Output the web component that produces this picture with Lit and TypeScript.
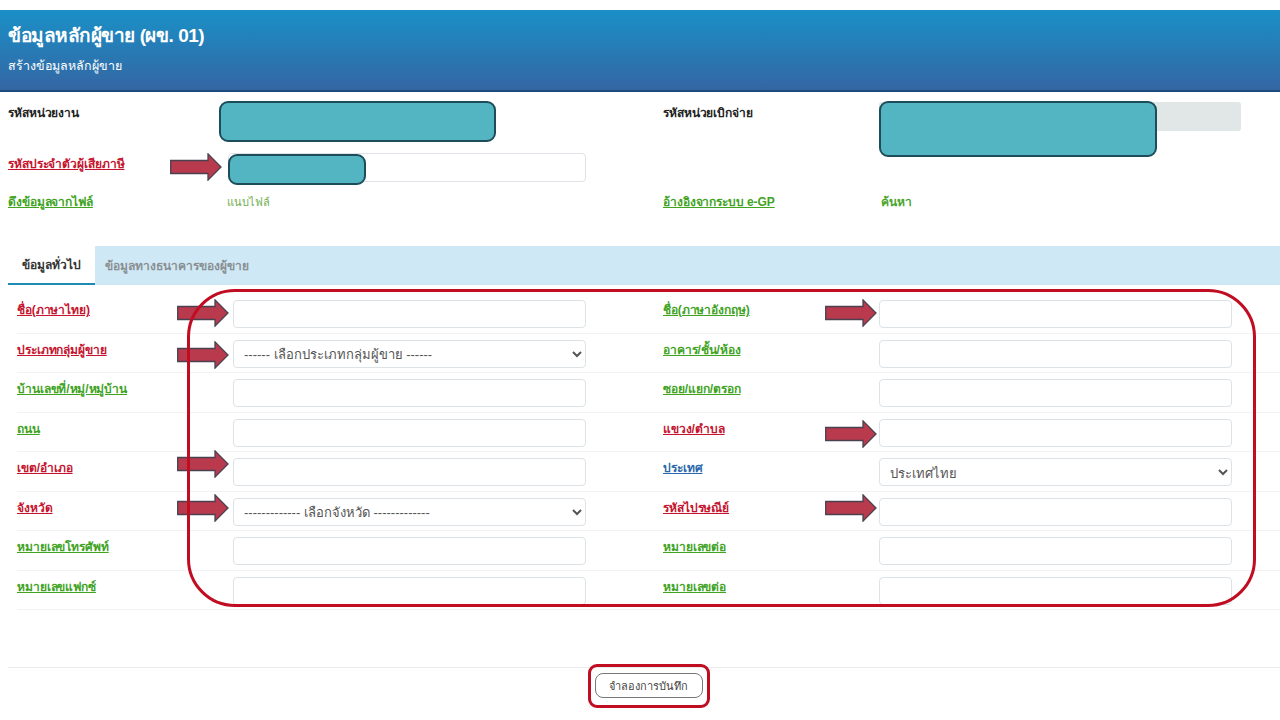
import { LitElement, html, css, svg } from "lit";
import { customElement } from "lit/decorators.js";

type Tone = "red" | "green" | "blue";
interface Field { label: string; tone: Tone; arrowDy?: number; select?: string; }

const rows: [Field, Field][] = [
  [{ label: "ชื่อ(ภาษาไทย)", tone: "red", arrowDy: 5 }, { label: "ชื่อ(ภาษาอังกฤษ)", tone: "green", arrowDy: 5 }],
  [{ label: "ประเภทกลุ่มผู้ขาย", tone: "red", arrowDy: 7, select: "------ เลือกประเภทกลุ่มผู้ขาย ------" }, { label: "อาคาร/ชั้น/ห้อง", tone: "green" }],
  [{ label: "บ้านเลขที่/หมู่/หมู่บ้าน", tone: "green" }, { label: "ซอย/แยก/ตรอก", tone: "green" }],
  [{ label: "ถนน", tone: "green" }, { label: "แขวง/ตำบล", tone: "red", arrowDy: 7 }],
  [{ label: "เขต/อำเภอ", tone: "red", arrowDy: -2 }, { label: "ประเทศ", tone: "blue", select: "ประเทศไทย" }],
  [{ label: "จังหวัด", tone: "red", arrowDy: 2, select: "------------- เลือกจังหวัด -------------" }, { label: "รหัสไปรษณีย์", tone: "red", arrowDy: 2 }],
  [{ label: "หมายเลขโทรศัพท์", tone: "green" }, { label: "หมายเลขต่อ", tone: "green" }],
  [{ label: "หมายเลขแฟกซ์", tone: "green" }, { label: "หมายเลขต่อ", tone: "green" }],
];

const arrow = (cls: string, dy?: number) => html`<svg class="arrow ${cls}" style=${dy === undefined ? "" : `top:${dy}px`} viewBox="0 0 52 28" aria-hidden="true">
  ${svg`<path d="M0.7 7.5H38V0.9L51 14L38 27.1V20.5H0.7Z" fill="#b83a4c" stroke="#4a4150" stroke-width="1.3"/>`}
</svg>`;

@customElement("app-root")
export class AppRoot extends LitElement {
  static styles = css`
    :host { display: block; width: 1280px; height: 720px; overflow: hidden; background: #fff; padding-top: 10px; box-sizing: border-box;
      font-family: "Liberation Sans", "Noto Sans", sans-serif; color: #333; font-size: 12px; letter-spacing: -0.1px; }
    * { box-sizing: border-box; }
    .head { height: 82px; padding: 12px 8px 0; color: #fff; background: linear-gradient(#1a90c7, #3466a3); border-bottom: 2px solid #1d4b7c; }
    .head h1 { margin: 0; font-size: 19px; letter-spacing: -0.47px; line-height: 28px; font-weight: 700; }
    .head p { margin: 6px 0 0; font-size: 12.5px; letter-spacing: -0.1px; line-height: 20px; }

    .top { display: grid; grid-template-columns: 219px 439px 216px 362px; grid-template-rows: 51px 38px 30px; padding: 10px 0 0 8px; height: 154px; }
    .top .lab { padding-top: 2px; line-height: 18px; font-weight: 700; }
    .top .c2 { margin-left: -3px; }
    .plain { color: #222; font-weight: 700; }
    .box { position: relative; height: 29px; }
    .gray { background: #e1e6e7; border-radius: 3px; height: 29px; width: 362px; margin-left: -3px; }
    .white { width: 358px; height: 29px; margin: 0 0 0 1px; background: #fff; border: 1px solid #dfe3e8; border-radius: 4px; }
    .cover { position: absolute; background: #54b5c2; border: 2px solid #1d4d5a; border-radius: 9px; }
    .cover.a { left: -8px; top: -1px; width: 277px; height: 41px; }
    .cover.b { left: -3px; top: -1px; width: 278px; height: 56px; }
    .cover.c { left: 1px; top: 1px; width: 138px; height: 31px; }
    .arrow { position: absolute; width: 52px; height: 28px; display: block; }
    .arrow.t { left: -57px; top: 0; }
    .attach { font-size: 11px; color: #6fae4f; line-height: 18px; padding-top: 2px; }
    .search { color: #4aa52c; font-weight: 700; line-height: 18px; padding-top: 2px; margin-left: -1px; }

    a { text-decoration: underline; font-weight: 700; }
    .red { color: #c5142f; }
    .green { color: #41a31f; }
    .blue { color: #2c69ac; }

    .tabs { display: flex; height: 39px; margin-left: 8px; background: #cfe8f6; }
    .tab { display: flex; align-items: center; padding: 0 14px; font-weight: 700; color: #8a8f92; white-space: nowrap; letter-spacing: 0; }
    .tab.on { background: #fff; color: #333; border-bottom: 2px solid #1f8bb5; width: 87px; }
    .tab.off { padding-left: 10px; }

    .form { position: relative; padding: 9px 0 0 17px; }
    .row { display: grid; grid-template-columns: 216px 353px 77px 216px 353px; height: 39.5px; border-bottom: 1px solid #f1f2f3; }
    .lab2 { padding-top: 7px; line-height: 18px; }
    .ctl { position: relative; padding-top: 6px; }
    .in, select { display: block; width: 353px; height: 28px; border: 1px solid #dde2e7; border-radius: 4px; background: #fff; font: inherit; font-size: 13px; letter-spacing: 0; color: #555; padding: 2px 6px 0; margin: 0; outline: none; }
    .ctl .arrow { left: -56px; }
    .ctl.right .arrow { left: -54.5px; }
    .ring { position: absolute; left: 187px; top: 4px; width: 1069px; height: 318px; border: 3px solid #c00d22; border-radius: 48px; pointer-events: none; }

    .foot { margin: 57px 0 0 8px; border-top: 1px solid #e9ecee; display: flex; justify-content: center; }
    .btnring { margin: -4px 0 0 9px; width: 122px; height: 44px; padding: 6px 4px; border: 3px solid #c00d22; border-radius: 9px; display: flex; }
    button { width: 108px; height: 25px; flex: none; margin: 0; padding: 0; background: #fff; border: 1.5px solid #777; border-radius: 8px; font: inherit; font-size: 11px; color: #444; }
  `;

  private cell(f: Field, side: string) {
    return html`
      <div class="lab2"><a class=${f.tone}>${f.label}</a></div>
      <div class="ctl ${side}">
        ${f.select
          ? html`<select><option>${f.select}</option></select>`
          : html`<input class="in" />`}
        ${f.arrowDy !== undefined ? arrow("", f.arrowDy) : ""}
      </div>`;
  }

  render() {
    return html`
      <div class="head">
        <h1>ข้อมูลหลักผู้ขาย (ผข. 01)</h1>
        <p>สร้างข้อมูลหลักผู้ขาย</p>
      </div>
      <div class="top">
        <div class="lab plain">รหัสหน่วยงาน</div>
        <div class="box"><div class="cover a"></div></div>
        <div class="lab plain c2">รหัสหน่วยเบิกจ่าย</div>
        <div class="box"><div class="gray"></div><div class="cover b"></div></div>

        <div class="lab"><a class="red">รหัสประจำตัวผู้เสียภาษี</a></div>
        <div class="box">
          <div class="white"></div><div class="cover c"></div>${arrow("t")}
        </div>
        <div></div><div></div>

        <div class="lab"><a class="green">ดึงข้อมูลจากไฟล์</a></div>
        <div class="attach">แนบไฟล์</div>
        <div class="lab c2"><a class="green">อ้างอิงจากระบบ e-GP</a></div>
        <div class="search">ค้นหา</div>
      </div>
      <div class="tabs">
        <div class="tab on">ข้อมูลทั่วไป</div>
        <div class="tab off">ข้อมูลทางธนาคารของผู้ขาย</div>
      </div>
      <div class="form">
        ${rows.map(([l, r]) => html`<div class="row">${this.cell(l, "")}<div></div>${this.cell(r, "right")}</div>`)}
        <div class="ring"></div>
      </div>
      <div class="foot">
        <div class="btnring"><button>จำลองการบันทึก</button></div>
      </div>
    `;
  }
}
